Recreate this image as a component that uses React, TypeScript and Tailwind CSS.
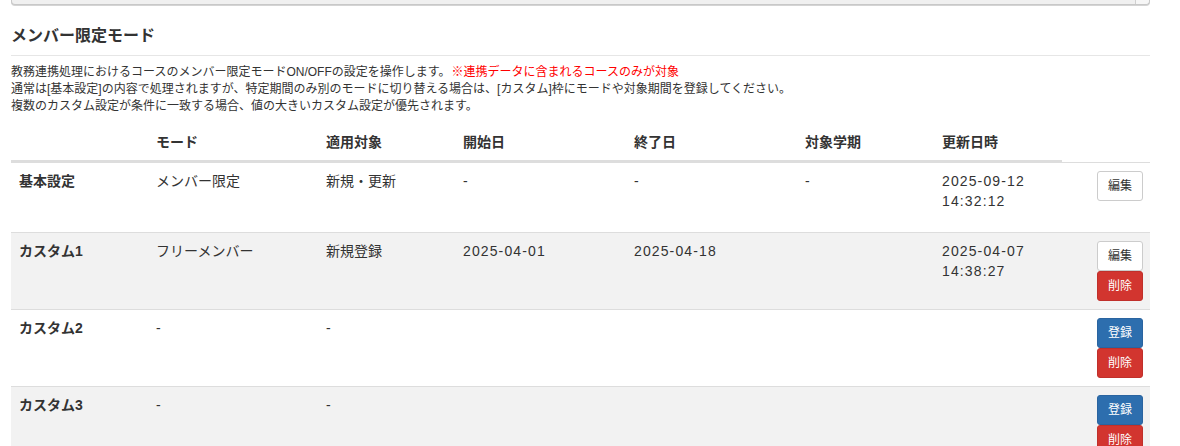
import React from 'react'

type Row = {
    label: string;
    mode: string;
    target: string;
    start: string;
    end: string;
    term: string;
    updated: string[];
    primary: 'edit' | 'register';
    canDelete: boolean;
    height: string;
};

const rows: Row[] = [
    { label: '基本設定', mode: 'メンバー限定', target: '新規・更新', start: '-', end: '-', term: '-', updated: ['2025-09-12', '14:32:12'], primary: 'edit', canDelete: false, height: 'h-[70px]' },
    { label: 'カスタム1', mode: 'フリーメンバー', target: '新規登録', start: '2025-04-01', end: '2025-04-18', term: '', updated: ['2025-04-07', '14:38:27'], primary: 'edit', canDelete: true, height: 'h-[77px]' },
    { label: 'カスタム2', mode: '-', target: '-', start: '', end: '', term: '', updated: [], primary: 'register', canDelete: true, height: 'h-[77px]' },
    { label: 'カスタム3', mode: '-', target: '-', start: '', end: '', term: '', updated: [], primary: 'register', canDelete: true, height: 'h-[77px]' },
];

const headers = ['', 'モード', '適用対象', '開始日', '終了日', '対象学期', '更新日時'];

const cols = 'grid grid-cols-[137px_170px_137px_171px_171px_137px_128px_88px]';

const App = () => {
    return (
        <div className="min-h-screen bg-white text-[#333] font-['Liberation_Sans','Noto_Sans_CJK_JP',sans-serif]">
            <div className="mx-[11px] w-[1139px]">
                {/* panel above, scrolled mostly out of view */}
                <div className="flex h-[5px] rounded-b-[4px] border border-t-0 border-[#c8c8c8] bg-[#f0f0f0] shadow-[0_1px_0_#d4d4d4]">
                    <div className="flex-1" />
                    <div className="w-[14px] border-l border-[#d0d0d0] bg-[#f6f6f6] rounded-br-[4px]" />
                </div>

                <h4 className="mt-[22px] text-[16px] leading-[18px] font-bold">メンバー限定モード</h4>
                <div className="mt-[10px] border-t border-[#e6e6e6]" />

                <div className="mt-[8px] text-[12px] leading-[17px]">
                    <p>
                        教務連携処理におけるコースのメンバー限定モードON/OFFの設定を操作します。
                        <span className="ml-[1px] text-[#f00]">※連携データに含まれるコースのみが対象</span>
                    </p>
                    <p>通常は[基本設定]の内容で処理されますが、特定期間のみ別のモードに切り替える場合は、[カスタム]枠にモードや対象期間を登録してください。</p>
                    <p>複数のカスタム設定が条件に一致する場合、値の大きいカスタム設定が優先されます。</p>
                </div>

                <div className="mt-[9px] text-[14px] leading-[20px]">
                    <div className={cols}>
                        {headers.map((h, i) => (
                            <div key={i} className="px-[8px] pt-[8px] pb-[8px] font-bold border-b-2 border-[#ddd]">{h || '\u00a0'}</div>
                        ))}
                        <div />
                    </div>
                    {rows.map((r, idx) => (
                        <div key={r.label} className={`${cols} ${r.height} border-t border-[#ddd] ${idx % 2 === 1 ? 'bg-[#f2f2f2]' : 'bg-white'}`}>
                            <div className="px-[8px] pt-[8px] font-bold">{r.label}</div>
                            <div className="px-[8px] pt-[8px]">{r.mode}</div>
                            <div className="px-[8px] pt-[8px]">{r.target}</div>
                            <div className="px-[8px] pt-[8px] tracking-[0.08em]">{r.start}</div>
                            <div className="px-[8px] pt-[8px] tracking-[0.08em]">{r.end}</div>
                            <div className="px-[8px] pt-[8px]">{r.term}</div>
                            <div className="px-[8px] pt-[8px] tracking-[0.08em]">
                                {r.updated.map((u) => (
                                    <div key={u}>{u}</div>
                                ))}
                            </div>
                            <div className="flex flex-col items-end pr-[7px] pt-[8px]">
                                {r.primary === 'edit' ? (
                                    <button className="h-[30px] w-[46px] rounded-[3px] border border-[#ccc] bg-white text-[12px] text-[#333]">編集</button>
                                ) : (
                                    <button className="h-[30px] w-[46px] rounded-[3px] border border-[#2a64a0] bg-[#2d6eae] text-[12px] text-white">登録</button>
                                )}
                                {r.canDelete && (
                                    <button className="h-[30px] w-[46px] rounded-[3px] border border-[#c0302b] bg-[#d2352f] text-[12px] text-white">削除</button>
                                )}
                            </div>
                        </div>
                    ))}
                </div>
            </div>
        </div>
    )
}

export default App
